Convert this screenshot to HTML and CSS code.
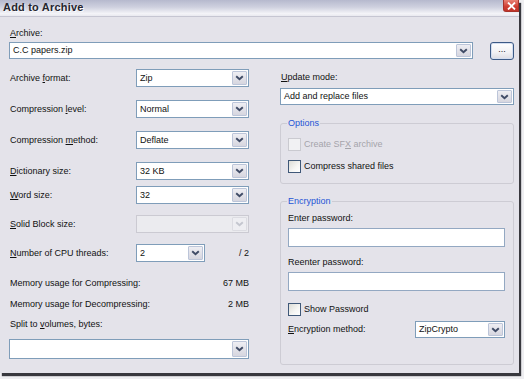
FILE: index.html
```html
<!DOCTYPE html>
<html>
<head>
<meta charset="utf-8">
<title>Add to Archive</title>
<link rel="stylesheet" href="styles.css">
</head>
<body>
<div class="window">
  <div class="titlebar">
    <span class="title">Add to Archive</span>
    <span class="close"><svg width="9" height="8" viewBox="0 0 9 8"><path d="M1 0.5 L8 7.5 M8 0.5 L1 7.5" stroke="#fff" stroke-width="1.8" fill="none"/></svg></span>
  </div>
  <div class="content">
    <div class="lbl archive-lbl"><u>A</u>rchive:</div>
    <div class="archive-row">
      <div class="combo grow tall17"><span class="val">C.C papers.zip</span><span class="arrow"><svg width="9" height="6" viewBox="0 0 9 6"><polyline points="1.2,1.2 4.5,4.3 7.8,1.2" fill="none" stroke="#3f4b66" stroke-width="1.9"/></svg></span></div>
      <button class="browse">...</button>
    </div>
    <div class="columns">
      <div class="col-left">
        <div class="row">
          <span class="lbl">Archive <u>f</u>ormat:</span>
          <div class="combo w113"><span class="val">Zip</span><span class="arrow"><svg width="9" height="6" viewBox="0 0 9 6"><polyline points="1.2,1.2 4.5,4.3 7.8,1.2" fill="none" stroke="#3f4b66" stroke-width="1.9"/></svg></span></div>
        </div>
        <div class="row gap13">
          <span class="lbl">Compression <u>l</u>evel:</span>
          <div class="combo w113"><span class="val">Normal</span><span class="arrow"><svg width="9" height="6" viewBox="0 0 9 6"><polyline points="1.2,1.2 4.5,4.3 7.8,1.2" fill="none" stroke="#3f4b66" stroke-width="1.9"/></svg></span></div>
        </div>
        <div class="row gap13">
          <span class="lbl">Compression <u>m</u>ethod:</span>
          <div class="combo w113"><span class="val">Deflate</span><span class="arrow"><svg width="9" height="6" viewBox="0 0 9 6"><polyline points="1.2,1.2 4.5,4.3 7.8,1.2" fill="none" stroke="#3f4b66" stroke-width="1.9"/></svg></span></div>
        </div>
        <div class="row gap13">
          <span class="lbl"><u>D</u>ictionary size:</span>
          <div class="combo w113"><span class="val">32 KB</span><span class="arrow"><svg width="9" height="6" viewBox="0 0 9 6"><polyline points="1.2,1.2 4.5,4.3 7.8,1.2" fill="none" stroke="#3f4b66" stroke-width="1.9"/></svg></span></div>
        </div>
        <div class="row gap6">
          <span class="lbl"><u>W</u>ord size:</span>
          <div class="combo w113"><span class="val">32</span><span class="arrow"><svg width="9" height="6" viewBox="0 0 9 6"><polyline points="1.2,1.2 4.5,4.3 7.8,1.2" fill="none" stroke="#3f4b66" stroke-width="1.9"/></svg></span></div>
        </div>
        <div class="row gap11">
          <span class="lbl"><u>S</u>olid Block size:</span>
          <div class="combo w113 disabled"><span class="val"></span><span class="arrow"><svg width="9" height="6" viewBox="0 0 9 6"><polyline points="1.2,1.2 4.5,4.3 7.8,1.2" fill="none" stroke="#c4c6cf" stroke-width="1.9"/></svg></span></div>
        </div>
        <div class="row gap11">
          <span class="lbl"><u>N</u>umber of CPU threads:</span>
          <div class="combo w69"><span class="val">2</span><span class="arrow"><svg width="9" height="6" viewBox="0 0 9 6"><polyline points="1.2,1.2 4.5,4.3 7.8,1.2" fill="none" stroke="#3f4b66" stroke-width="1.9"/></svg></span></div>
          <span class="threads">/ 2</span>
        </div>
        <div class="mem m1"><span>Memory usage for Compressing:</span><span>67 MB</span></div>
        <div class="mem m2"><span>Memory usage for Decompressing:</span><span>2 MB</span></div>
        <div class="lbl split-lbl">Split to <u>v</u>olumes, bytes:</div>
        <div class="combo split"><span class="val"></span><span class="arrow"><svg width="9" height="6" viewBox="0 0 9 6"><polyline points="1.2,1.2 4.5,4.3 7.8,1.2" fill="none" stroke="#3f4b66" stroke-width="1.9"/></svg></span></div>
      </div>
      <div class="col-right">
        <div class="lbl update-lbl"><u>U</u>pdate mode:</div>
        <div class="combo update tall17"><span class="val">Add and replace files</span><span class="arrow"><svg width="9" height="6" viewBox="0 0 9 6"><polyline points="1.2,1.2 4.5,4.3 7.8,1.2" fill="none" stroke="#3f4b66" stroke-width="1.9"/></svg></span></div>
        <fieldset class="group options">
          <legend>Options</legend>
          <div class="check disabled-text"><span class="box off"></span><span>Create SF<u>X</u> archive</span></div>
          <div class="check second"><span class="box"></span><span>Compress shared files</span></div>
        </fieldset>
        <fieldset class="group enc">
          <legend>Encryption</legend>
          <div class="lbl">Enter password:</div>
          <div class="input"></div>
          <div class="lbl reenter">Reenter password:</div>
          <div class="input"></div>
          <div class="check showpw"><span class="box"></span><span>Show Password</span></div>
          <div class="enc-row">
            <span class="lbl"><u>E</u>ncryption method:</span>
            <div class="combo w90 tall17"><span class="val">ZipCrypto</span><span class="arrow"><svg width="9" height="6" viewBox="0 0 9 6"><polyline points="1.2,1.2 4.5,4.3 7.8,1.2" fill="none" stroke="#3f4b66" stroke-width="1.9"/></svg></span></div>
          </div>
        </fieldset>
      </div>
    </div>
  </div>
</div>
</body>
</html>
```

FILE: styles.css
```css
* { box-sizing: border-box; }
html, body { margin: 0; padding: 0; }
body {
  width: 524px;
  height: 379px;
  overflow: hidden;
  background: #eeeef1;
  font-family: "Liberation Sans", Arial, sans-serif;
  font-size: 9px;
  line-height: 11px;
  color: #111;
}
u { text-decoration: underline; text-underline-offset: 1px; }

.window {
  width: 519px;
  height: 373px;
  background: #e4e3ea;
  box-shadow: 2px 3px 1px rgba(35, 35, 42, 0.9);
  display: flex;
  flex-direction: column;
}

.titlebar {
  height: 17px;
  flex: none;
  display: flex;
  align-items: flex-start;
  background: linear-gradient(#b6b9cd, #cfd1df 45%, #f4f4f8 85%, #e9e9ef);
  border-bottom: 1px solid #c6c6d2;
}
.title {
  flex: 1;
  padding-left: 3px;
  font-size: 11px;
  line-height: 15px;
  font-weight: bold;
  color: #26262f;
  text-shadow: 1px 1px 0 rgba(255, 255, 255, 0.8);
  letter-spacing: 0.2px;
}
.close {
  width: 16px;
  height: 12px;
  display: flex;
  align-items: center;
  justify-content: center;
  background: linear-gradient(#e88275, #cf3d31 60%, #c0342a);
  border: 1px solid #a8322a;
  border-top: none;
  border-radius: 0 0 0 3px;
}

.content {
  padding: 0 5px 0 9px;
  display: flex;
  flex-direction: column;
}
.lbl { white-space: nowrap; }
.archive-lbl { margin-top: 11px; padding-left: 1px; }

.archive-row {
  margin-top: 3px;
  display: flex;
  align-items: flex-start;
  gap: 17px;
}
.browse {
  width: 24px;
  height: 18px;
  padding: 0 0 3px;
  font-family: inherit;
  font-size: 9px;
  line-height: 11px;
  color: #222;
  background: linear-gradient(#ffffff, #f1f1f4 60%, #dcdce3);
  border: 1px solid #3c5a86;
  border-radius: 3px;
  box-shadow: inset 0 0 0 1px #d4def0;
}

/* combo box */
.combo {
  height: 18px;
  display: flex;
  align-items: stretch;
  background: #fff;
  border: 1px solid #7f9db9;
}
.combo.tall17 { height: 17px; }
.combo.grow { flex: 1; }
.combo .val {
  flex: 1;
  padding-left: 3px;
  display: flex;
  align-items: center;
  white-space: nowrap;
}
.combo .arrow {
  width: 15px;
  margin: 1px;
  display: flex;
  align-items: center;
  justify-content: center;
  background: linear-gradient(#eeeef3, #d6d6df);
  border: 1px solid #bcc5d9;
  border-radius: 1px;
}
.combo.disabled {
  background: #ebebef;
  border-color: #cbcad2;
}
.combo.disabled .arrow {
  background: #eeeef2;
  border-color: #dcdce2;
}
.w113 { width: 113px; }
.w69 { width: 69px; }
.w90 { width: 90px; }

.columns {
  margin-top: 9px;
  display: flex;
  gap: 31px;
}
.col-left {
  width: 240px;
  display: flex;
  flex-direction: column;
}
.col-right {
  width: 234px;
  display: flex;
  flex-direction: column;
}

.row {
  height: 18px;
  display: flex;
  align-items: center;
}
.row .lbl { width: 127px; padding-left: 1px; }
.gap13 { margin-top: 13px; }
.gap11 { margin-top: 11px; }
.gap6 { margin-top: 6px; }
.threads { margin-left: auto; }

.mem {
  display: flex;
  justify-content: space-between;
  padding-left: 1px;
}
.m1 { margin-top: 16px; }
.m2 { margin-top: 10px; }
.split-lbl { margin-top: 9px; padding-left: 1px; }
.combo.split { margin-top: 9px; height: 20px; }

/* right column */
.update-lbl { margin-top: 3px; padding-left: 1px; }
.combo.update { margin-top: 5px; }

.group {
  margin: 0;
  min-width: 0;
  padding: 9px 8px 10px 7px;
  border: 1px solid #cdccd4;
  border-radius: 3px;
}
.group legend {
  padding: 0 1px;
  margin-left: -1px;
  color: #1f55d6;
  line-height: 11px;
}
.options { margin-top: 13px; }
.enc { margin-top: 12px; padding-top: 6px; padding-bottom: 26px; }

.check {
  height: 13px;
  display: flex;
  align-items: center;
  gap: 3px;
}
.check.second { margin-top: 9px; }
.box {
  width: 13px;
  height: 13px;
  flex: none;
  border: 1px solid #3f5878;
  background: linear-gradient(135deg, #dcdcd6, #f6f6f4 60%, #ffffff);
}
.box.off {
  border-color: #cacad0;
  background: #f1f1f3;
}
.disabled-text { color: #a4a4aa; }

.input {
  height: 19px;
  margin-top: 4px;
  background: #fff;
  border: 1px solid #93a8c2;
}
.reenter { margin-top: 10px; }
.check.showpw { margin-top: 12px; }
.enc-row {
  margin-top: 5px;
  display: flex;
  align-items: center;
  justify-content: space-between;
}
```
